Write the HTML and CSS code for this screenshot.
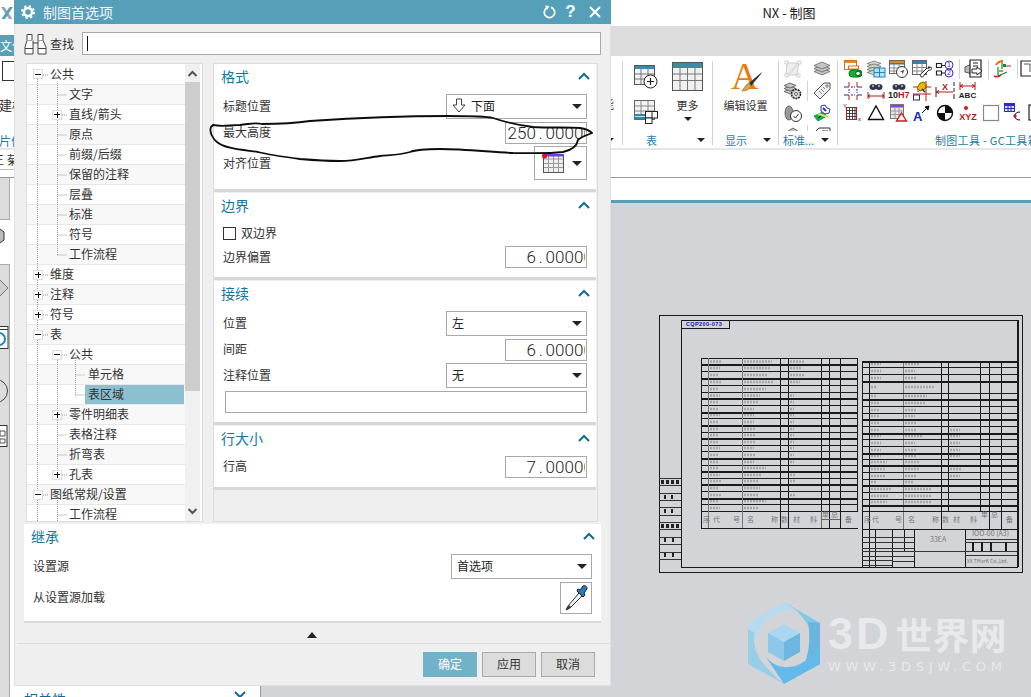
FILE: index.html
```html
<!DOCTYPE html>
<html lang="zh-CN">
<head>
<meta charset="utf-8">
<title>NX - 制图</title>
<link rel="stylesheet" href="styles.css">
</head>
<body>
<div class="app">
  <header class="app-title">
    <svg class="nx-logo" width="14" height="14" viewBox="0 0 14 14"><path d="M1 1h3.500l8 12H9z" fill="#9aa7ad"/><path d="M13 1H9.500l-8 12H5z" fill="#5a9fb8"/></svg>
    <span class="app-name">NX - 制图</span>
  </header>
  <div class="tab-band"><div class="tab-left"><span class="file-tab">文件</span></div></div>
  <div class="ribbon">
    <div class="group group-hidden">
      <div class="hidden-body">
        <div class="hidden-left"><span class="small-box"></span><span class="frag frag-build">建模</span></div>
        <span class="frag frag-right">能</span>
      </div>
      <div class="group-label label-end"><span class="frag-blue">片体</span><i class="caret"></i></div>
    </div>
    <div class="group group-table">
      <div class="table-body">
        <div class="table-col">
          <svg width="24" height="24" viewBox="0 0 24 24"><rect x=".5" y=".5" width="20" height="19" fill="#f2f2f2" stroke="#555"/><rect x="1" y="1" width="19" height="3" fill="#3d8ca6"/><path d="M1 9h19M1 14h19M7 4v15M14 4v15" stroke="#777" fill="none"/><circle cx="16.500" cy="16.500" r="6.500" fill="#fff" stroke="#222"/><path d="M13 16.500h7M16.500 13v7" stroke="#222" stroke-width="1.200"/></svg>
          <svg width="24" height="24" viewBox="0 0 24 24"><rect x=".5" y=".5" width="20" height="19" fill="#f2f2f2" stroke="#666"/><path d="M1 6h19M1 11h19M7 1v18M14 1v18" stroke="#888" fill="none"/><rect x="1" y="14" width="12" height="5" fill="#2f86a8"/><path d="M1 16.500h12" stroke="#cde"/><rect x="11.500" y="11.500" width="7" height="6.500" fill="#fff" stroke="#222"/><rect x="18" y="11.500" width="5.500" height="6.500" fill="#fff" stroke="#222"/><rect x="11.500" y="18" width="6.500" height="5.500" fill="#fff" stroke="#222"/></svg>
        </div>
        <div class="more-col">
          <svg width="31" height="29" viewBox="0 0 31 29"><rect x=".5" y=".5" width="30" height="28" fill="#f0f0f0" stroke="#555"/><rect x="1" y="1" width="29" height="4" fill="#3d8ca6"/><path d="M1 5.500h29M1 12h29M1 18.500h29M8 5v23M15.500 5v23M23 5v23" stroke="#777" fill="none"/></svg>
          <span class="ribbon-text">更多</span>
          <i class="caret caret-more"></i>
        </div>
      </div>
      <div class="group-label"><span>表</span><i class="caret"></i></div>
    </div>
    <div class="group group-display">
      <div class="display-body">
        <svg width="34" height="31" viewBox="0 0 34 31"><text x="2" y="27" class="big-a">A</text><path d="M33 10 20 21l2 3 10-12z" fill="#333"/><path d="M20 21c-3 1-4 4-5 5s-2 3-2 3c3 0 8-1 9-5z" fill="#d4a64a" stroke="#8a6a20" stroke-width=".6"/></svg>
        <span class="ribbon-text">编辑设置</span>
      </div>
      <div class="group-label"><span>显示</span><i class="caret"></i></div>
    </div>
    <div class="group group-standard">
      <div class="std-body">
        <div class="tool-row">
          <span class="tool"><svg width="18" height="18" viewBox="0 0 18 18"><path d="M3 3h12l-2 12H2z" fill="#eee" stroke="#ccc"/><path d="M5 14 14 4" stroke="#ddd" stroke-width="2"/><path d="M1 1h3v3H1zM14 1h3v3h-3zM1 14h3v3H1zM13 14h3v3h-3z" fill="#fff" stroke="#bbb" stroke-width=".7"/></svg></span>
          <span class="tool-sep tool-sep-none"></span>
          <span class="tool"><svg width="18" height="18" viewBox="0 0 18 18"><g fill="#c4c4c4" stroke="#666" stroke-width=".8"><path d="M9 8 17 11.500 9 15 1 11.500z"/><path d="M9 5 17 8.500 9 12 1 8.500z"/><path d="M9 2 17 5.500 9 9 1 5.500z"/></g></svg></span>
        </div>
        <div class="tool-row">
          <span class="tool"><svg width="18" height="18" viewBox="0 0 18 18"><g fill="#c4c4c4" stroke="#555" stroke-width=".8"><path d="M6 7 12 9.500 6 12 0 9.500z"/><path d="M6 4 12 6.500 6 9 0 6.500z"/><path d="M6 1 12 3.500 6 6 0 3.500z"/></g><circle cx="12" cy="12" r="4.500" fill="#ddd" stroke="#222" stroke-width="1.600" stroke-dasharray="2 .8"/><circle cx="12" cy="12" r="1.500" fill="#fff" stroke="#222" stroke-width=".7"/></svg></span>
          <span class="tool-sep"></span>
          <span class="tool"><svg width="18" height="18" viewBox="0 0 18 18"><path d="M11 1h6v6L7 17l-6-6z" fill="#eee" stroke="#555"/><circle cx="14" cy="4" r="1.200" fill="#fff" stroke="#444" stroke-width=".7"/><path d="M6 9l3 3M8 7l3 3M10 5l2 2" stroke="#888"/></svg></span>
        </div>
        <div class="tool-row">
          <span class="tool"><svg width="18" height="18" viewBox="0 0 18 18"><ellipse cx="5" cy="9" rx="4" ry="7" fill="#999" stroke="#666"/><circle cx="12" cy="12" r="5.500" fill="#fff" stroke="#333"/><path d="M9.500 12l2 2 3-4" fill="none" stroke="#333"/></svg></span>
          <span class="tool-sep tool-sep-none"></span>
          <span class="tool"><svg width="18" height="18" viewBox="0 0 18 18"><path d="M1 12 10 8l4 4-9 5z" fill="#1bb04a" stroke="#0a5"/><path d="M8 2l4-1 2 3 3 1-1 4-4 1-4-3z" fill="#fff" stroke="#2233cc"/><path d="M10 4l3 3" stroke="#2233cc" stroke-width="2"/><path d="M5 10l11 3" stroke="#e6e05a" stroke-width="2"/><path d="M5 14l3-2" stroke="#111"/></svg></span>
        </div>
        <div class="tool-row">
          <span class="tool"><svg width="18" height="18" viewBox="0 0 18 18"><path d="M9 2 17 7 9 12 1 7z" fill="#c4c4c4" stroke="#666"/></svg></span>
          <span class="tool-sep"></span>
          <span class="tool"><svg width="18" height="18" viewBox="0 0 18 18"><path d="M1 7 6 2h11v14H1z" fill="#fff" stroke="#333"/><path d="M9 5h6v6H9zM12 5v6M9 8h6" fill="none" stroke="#333"/></svg></span>
        </div>
      </div>
      <div class="group-label"><span>标准...</span><i class="caret"></i></div>
    </div>
    <div class="group group-tools">
      <div class="tools-body">
        <div class="tool-row">
          <span class="tool"><svg width="18" height="18" viewBox="0 0 18 18"><rect x=".5" y=".5" width="12" height="9" fill="#fff" stroke="#d8701a"/><rect x="1" y="1" width="11" height="2" fill="#e8892a"/><rect x="4.500" y="6" width="10" height="3" fill="#fff" stroke="#d8701a"/><rect x="5" y="10" width="13" height="7" rx="3.500" fill="#11b52f" stroke="#0a6a1a"/><circle cx="14" cy="13.500" r="2.300" fill="#fff" stroke="#0a4a10"/></svg></span>
          <span class="tool"><svg width="20" height="18" viewBox="0 0 20 18"><g fill="#cfd9c8" stroke="#5a6a5a" stroke-width=".7"><path d="M8 1 15 3.500 8 6 1 3.500z"/><path d="M8 4 15 6.500 8 9 1 6.500z"/><path d="M8 7 15 9.500 8 12 1 9.500z"/><path d="M8 10 15 12.500 8 15 1 12.500z"/></g><rect x="8" y="8" width="11" height="9" fill="#bde0f2" stroke="#1e86c0"/><path d="M8 12.500h11M13.500 8v9" stroke="#1e86c0"/></svg></span>
          <span class="tool"><svg width="20" height="18" viewBox="0 0 20 18"><rect x=".5" y=".5" width="15" height="13" fill="#fff" stroke="#666"/><rect x="1" y="1" width="14" height="2" fill="#e08a2a"/><rect x="1" y="3" width="14" height="1.500" fill="#2f7ea8"/><path d="M1 8h14M1 11h14M5 4v9M10 4v9" stroke="#888"/><circle cx="13" cy="12" r="5.500" fill="#fff" stroke="#333"/><path d="M10.500 12 15.500 9.500 13.500 14.500 13 12z" fill="#555"/></svg></span>
          <span class="tool"><svg width="20" height="18" viewBox="0 0 20 18"><rect x=".5" y=".5" width="14" height="14" fill="#fff" stroke="#666"/><rect x="1" y="1" width="13" height="3" fill="#2f86a8"/><path d="M1 7.500h13M1 11h13M5 4v10M10 4v10" stroke="#888"/><path d="M18 7c-1 2-2 2-3 1l-6 6c-1 1-1 3 1 3s2-2 2-2l5-5c2 1 3-1 2-3l-2 1-1-1z" fill="#fff" stroke="#333"/></svg></span>
          <span class="tool"><svg width="20" height="18" viewBox="0 0 20 18"><path d="M1.500 3.500h5v4h-5zM1.500 11h5v4h-5z" fill="#fff" stroke="#222" stroke-width="1.200"/><path d="M6.500 5.500h4M6.500 13h4" stroke="#222"/><circle cx="14" cy="5" r="4" fill="#fff" stroke="#3a2bb5"/><circle cx="14" cy="13" r="4" fill="#fff" stroke="#3a2bb5"/><text x="14" y="7" class="t-num">1</text><text x="14" y="15" class="t-num">2</text></svg></span>
          <span class="tool-sep"></span>
          <span class="tool"><svg width="20" height="20" viewBox="0 0 20 20"><path d="M1 8 8 5v10l-7-2z" fill="#bbb" stroke="#555"/><path d="M6 1h11v17H6z" fill="#fff" stroke="#222" stroke-width="1.200"/><path d="M9 4h5M9 7h5" stroke="#222"/><path d="M8 10h5V8l5 4-5 4v-2H8z" fill="#fff" stroke="#222"/></svg></span>
          <span class="tool-sep"></span>
          <span class="tool"><svg width="20" height="20" viewBox="0 0 20 20"><path d="M5 17V8M5 17l9-4M9 10V2" stroke="#1a8a30" stroke-width="1.200" fill="none"/><path d="M3 6c2-3 4-4 7-4" stroke="#e86a1a" stroke-width="2" fill="none"/><path d="M1 17c2 1 5 1 7-1" stroke="#d02020" stroke-width="1.500" fill="none"/><rect x="10" y="5" width="3" height="3" fill="#1a8a30"/><path d="M13 7h5" stroke="#d02020"/><rect x="6" y="11" width="4" height="2" fill="#7ac020"/></svg></span>
          <span class="tool-sep"></span>
          <span class="tool tool-edge"><svg width="20" height="20" viewBox="0 0 20 20"><path d="M1 2h14v15H1z" fill="#fff" stroke="#222" stroke-width="1.200"/><path d="M4 5h6v8" fill="none" stroke="#555"/></svg></span>
        </div>
        <div class="tool-row">
          <span class="tool"><svg width="18" height="18" viewBox="0 0 18 18" fill="none"><path d="M0 5h5M13 5h5M0 13h5M13 13h5" stroke="#2a2a9a"/><path d="M5 0v5M13 0v5M5 13v5M13 13v5" stroke="#c01818"/><path d="M7 5h4M7 13h4M5 7v4M13 7v4" stroke="#2a2a9a" stroke-dasharray="2 1"/></svg></span>
          <span class="tool"><svg width="18" height="18" viewBox="0 0 18 18"><ellipse cx="6" cy="5" rx="3.500" ry="3" fill="#334"/><ellipse cx="12" cy="5" rx="3.500" ry="3" fill="#334"/><circle cx="6" cy="4" r="1.200" fill="#8ac"/><circle cx="12" cy="4" r="1.200" fill="#8ac"/><path d="M1 10v7M17 10v7M1 14h16M1 14l2-1.500M1 14l2 1.500M17 14l-2-1.500M17 14l-2 1.500" stroke="#b01818" fill="none"/></svg></span>
          <span class="tool"><svg width="22" height="18" viewBox="0 0 22 18"><ellipse cx="8" cy="5" rx="3.500" ry="3" fill="#334"/><ellipse cx="14" cy="5" rx="3.500" ry="3" fill="#334"/><circle cx="8" cy="4" r="1.200" fill="#8ac"/><circle cx="14" cy="4" r="1.200" fill="#8ac"/><text x="0" y="16" class="t-tol">10<tspan class="t-red">H7</tspan></text></svg></span>
          <span class="tool"><svg width="20" height="20" viewBox="0 0 20 20"><path d="M1 6h18M1 13h18M14 0v20M6 7v4" stroke="#c01818" fill="none"/><rect x="1.500" y="14" width="6" height="5" fill="#fff" stroke="#2a2a9a"/><path d="M8 2l4-1 2 3-1 4-5 2-3-3z" fill="#e6b800" stroke="#8a6a00"/><path d="M10 8l3 3" stroke="#333" stroke-width="1.500"/></svg></span>
          <span class="tool"><svg width="20" height="20" viewBox="0 0 20 20" fill="none"><path d="M1 6v10M19 1v4M19 7v4M19 13v5" stroke="#222"/><path d="M1 11h17M1 11l3-1.500M1 11l3 1.500" stroke="#b01818"/><text x="10" y="9" class="t-x">X</text></svg></span>
          <span class="tool"><svg width="20" height="20" viewBox="0 0 20 20"><path d="M2 1v8M17 1v8M2 5h15M2 5l3-1.500M2 5l3 1.500M17 5l-3-1.500M17 5l-3 1.500" stroke="#b01818" fill="none"/><text x="9.500" y="17" class="t-abc">ABC</text></svg></span>
        </div>
        <div class="tool-row">
          <span class="tool"><svg width="20" height="18" viewBox="0 0 20 18"><text x="0" y="4" class="t-mini">Y</text><rect x="3.500" y="3.500" width="10" height="12" fill="#fff" stroke="#b01818"/><path d="M4 6.500h9M4 9.500h9M4 12.500h9M6.500 4v11M9.500 4v11M12 4v11" stroke="#333" stroke-width=".9"/><text x="15" y="17" class="t-mini">x</text></svg></span>
          <span class="tool"><svg width="18" height="18" viewBox="0 0 18 18"><path d="M9 2 16.500 15.500h-15z" fill="#fff" stroke="#111" stroke-width="1.400"/></svg></span>
          <span class="tool"><svg width="18" height="18" viewBox="0 0 18 18"><rect x=".5" y=".5" width="13" height="14" fill="#e8e8e8" stroke="#777"/><rect x="1" y="1" width="12" height="2.500" fill="#7a4ad8"/><path d="M1 7h12M1 10.500h12M5 3v12M9 3v12" stroke="#999"/><path d="M11.500 9 16.500 17h-10z" fill="#fff" stroke="#d01818" stroke-width="1.400"/></svg></span>
          <span class="tool"><svg width="18" height="18" viewBox="0 0 18 18"><path d="M9 9l7-7M16 2l-4 1 3 3z" stroke="#111" fill="#111"/><text x="0" y="17" class="t-a">A</text></svg></span>
          <span class="tool"><svg width="18" height="18" viewBox="0 0 18 18"><circle cx="9" cy="9" r="7.500" fill="#fff" stroke="#111" stroke-width="1.400"/><path d="M9 1.500A7.500 7.500 0 0 1 16.500 9H9zM9 9v7.500A7.500 7.500 0 0 1 1.500 9z" fill="#111"/></svg></span>
          <span class="tool"><svg width="22" height="18" viewBox="0 0 22 18"><circle cx="9" cy="4" r="2" fill="#d01818"/><text x="11" y="16" class="t-xyz">XYZ</text></svg></span>
          <span class="tool"><svg width="18" height="18" viewBox="0 0 18 18"><rect x="1.500" y="1.500" width="15" height="15" fill="#fff" stroke="#888" stroke-width="1.200"/></svg></span>
          <span class="tool"><svg width="20" height="20" viewBox="0 0 20 20"><rect x=".5" y=".5" width="10" height="8" fill="#ddd" stroke="#2a2ad0"/><rect x="1" y="1" width="9" height="2" fill="#2a2ad0"/><path d="M1 5.500h9M4 3v5M7 3v5" stroke="#2a2ad0"/><path d="M16 9c-3 0-5 1-5 4s2 4 5 4" fill="none" stroke="#111"/><circle cx="11" cy="13" r="1.700" fill="#d01818"/></svg></span>
          <span class="tool tool-edge"><svg width="20" height="20" viewBox="0 0 20 20"><rect x="4" y="2" width="14" height="15" fill="#fff" stroke="#222" stroke-width="1.200"/></svg></span>
        </div>
      </div>
      <div class="group-label"><span class="tools-name">制图工具 - GC工具箱</span></div>
    </div>
  </div>
  <div class="cmd-band"><div class="cmd-left"><span class="frag frag-cmd">王 菊</span></div></div>
  <div class="main">
    <aside class="sidebar">
      <div class="rail">
        <div class="rail-top"></div>
        <div class="rail-icon"><svg width="9" height="16" viewBox="0 0 9 16"><path d="M-6 4 0 1l4 3v8l-4 3-6-3z" fill="#bbb" stroke="#333"/></svg></div>
        <div class="rail-panel">
          <svg width="9" height="24" viewBox="0 0 9 24"><path d="M-8 12 0 4l8 8-8 8z" fill="#cfcfcf" stroke="#777"/></svg>
          <svg width="9" height="24" viewBox="0 0 9 24"><rect x="-8" y=".5" width="16" height="22" fill="#fff" stroke="#333"/><path d="M-8 3.500H8" stroke="#333"/><circle cx="-1" cy="13" r="6" fill="none" stroke="#1e86c0" stroke-width="2"/></svg>
          <svg width="9" height="30" viewBox="0 0 9 30"><circle cx="-4" cy="15" r="11.500" fill="none" stroke="#444"/></svg>
          <svg class="rail-last" width="9" height="24" viewBox="0 0 9 24"><rect x="-8" y=".5" width="15" height="21" fill="#fff" stroke="#333"/><path d="M0 6h5v5H0zM0 14h5v4H0z" fill="none" stroke="#555"/></svg>
        </div>
      </div>
      <div class="side-foot"><span class="side-foot-name">相关性</span><svg width="12" height="8" viewBox="0 0 12 8"><path d="M1 1l5 5 5-5" fill="none" stroke="#0e6d8f" stroke-width="2"/></svg></div>
    </aside>
    <div class="workspace">
      <div class="view-band"></div>
      <div class="canvas">
        <svg class="sheet" width="364" height="258" viewBox="659 315 364 258">
          <g fill="none" stroke="#a8a8a8" stroke-width="2.500" stroke-dasharray="2 1">
            <path d="M710 361.500h12M744 361.500h28M790 361.500h14M710 368h10M744 368h26M790 368h12M710 375h8M744 375h24M790 375h14M710 382h12M744 382h30M790 382h10M710 389h8M744 389h22M710 395.500h10M744 395.500h16M790 395.500h4M710 402h8M744 402h14M790 402h4M710 409h8M744 409h10M790 409h4M710 415h10M744 415h10M790 415h4M710 422h8M744 422h10M790 422h4M710 429h8M744 429h12M790 429h4M710 435h8M744 435h12M790 435h4M710 442h8M744 442h12M790 442h4M710 448h10M744 448h10M790 448h4M710 455h8M744 455h12M790 455h4M710 462h8M744 462h10M790 462h4M710 468h8M744 468h22M710 475h10M744 475h18M790 475h6M710 481h12M744 481h14M790 481h6M710 488h8M744 488h16M710 495h12M744 495h14M790 495h6M710 501h8M744 501h22M710 508h10M744 508h14"/>
            <path d="M871 364h10M905 364h14M871 371h10M905 371h10M871 378h10M905 378h12M871 387h6M905 387h30M871 396h6M905 396h22M871 403h8M905 403h20M871 410h8M905 410h12M871 416h8M905 416h10M871 423h8M905 423h12M871 430h8M905 430h12M950 430h10M871 436h10M905 436h18M950 436h10M871 443h10M905 443h10M950 443h10M871 450h10M905 450h12M950 450h10M871 456h10M905 456h12M950 456h10M871 462h16M905 462h14M871 469h14M905 469h14M950 469h12M871 476h14M905 476h12M950 476h10M871 482h6M905 482h8M871 489h20M905 489h26M871 496h18M905 496h26M871 502h16M905 502h26"/>
          </g>
          <g fill="none" stroke="#1a1a1a" shape-rendering="crispEdges">
            <rect x="659.500" y="315.500" width="363" height="257"/>
            <rect x="681.500" y="320.500" width="336" height="247" stroke-width="1.400"/>
            <path d="M1017.500 320v247" stroke-width="2"/>
            <path d="M681 328h48V321"/>
            <path d="M659 478h22M659 485h22M659 493h22M659 500h22M659 507h22M659 515h22M659 522h22M659 529h22M659 537h22M659 544h22M659 552h22M659 559h22" stroke="#333"/>
            <path d="M701.500 358v170M857.500 358v153M701 528.500h157M701 511.500h157" stroke-width="1.200"/>
            <path d="M701 358.500h157M701 364.500h157M701 371.500h157M701 378.500h157M701 385.500h157M701 392.500h157M701 398.500h157M701 405.500h157M701 412.500h157M701 418.500h157M701 425.500h157M701 432.500h157M701 438.500h157M701 445.500h157M701 451.500h157M701 458.500h157M701 465.500h157M701 471.500h157M701 478.500h157M701 484.500h157M701 491.500h157M701 498.500h157M701 504.500h157"/>
            <path d="M701 365.500h157M701 379.500h157M701 399.500h157M701 413.500h157M701 426.500h157M701 439.500h157M701 459.500h157M701 472.500h157M701 485.500h157M701 499.500h157"/>
            <path d="M780.500 358v170M788.500 358v170M821.500 358v153M829.500 358v170M840.500 358v170M857.500 358v153"/>
            <path d="M708.500 358v170M742.500 358v170" stroke="#777"/>
            <path d="M821 519h19M821.500 511v17" stroke="#666"/>
            <path d="M862.500 361v206M941.500 361v168M948.500 361v150M980.500 361v150M989.500 361v168M1001.500 361v168M869.500 361v168"/>
            <path d="M903.500 361v168" stroke="#777"/>
            <path d="M862 361.500h155M862 367.500h155M862 374.500h155M862 381.500h155M862 393.500h155M862 399.500h155M862 406.500h155M862 413.500h155M862 419.500h155M862 426.500h155M862 433.500h155M862 439.500h155M862 446.500h155M862 453.500h155M862 459.500h155M862 465.500h155M862 472.500h155M862 479.500h155M862 485.500h155M862 492.500h155M862 499.500h155M862 505.500h155M862 511.500h155M862 529.500h155"/>
            <path d="M862 362.500h155M862 382.500h155M862 400.500h155M862 420.500h155M862 434.500h155M862 454.500h155M862 466.500h155M862 486.500h155M862 506.500h155"/>
            <path d="M869.500 529v38M875.500 529v38M892.500 529v38M904.500 529v22M914.500 529v38M965.500 529v38"/>
            <path d="M862 537.500h52M862 542.500h52M862 548.500h52M862 551.500h52M862 556.500h30M862 560.500h30M862 565.500h30M892 556.500h22M892 561.500h22M914 551.500h51M965 539.500h52M965 542.500h52M965 551.500h52M965 555.500h52" stroke="#333"/>
            <path d="M972.500 542v9M981.500 542v9M990.500 542v9M1005.500 542v9" stroke-width="2"/>
          </g>
          <g fill="none" stroke="#222" stroke-width="4">
            <path d="M661 482h3M666 482h3M671 482h3M676 482h3M664 497h2M671 497h2M664 511h2M671 511h2M661 526h3M666 526h3M671 526h3M676 526h3M664 540h2M672 540h2M664 555h2M672 555h2"/>
          </g>
          <text x="686" y="326" class="sheet-tab">CQP200-073</text>
          <g class="sheet-text">
            <text x="703" y="522">序</text><text x="713" y="522">代</text><text x="733" y="522">号</text><text x="747" y="522">名</text><text x="771" y="522">称</text><text x="781" y="522">数</text><text x="793" y="522">材</text><text x="810" y="522">料</text><text x="822" y="517">单</text><text x="831" y="517">总</text><text x="845" y="522">备</text>
            <text x="864" y="522">序</text><text x="872" y="522">代</text><text x="895" y="522">号</text><text x="908" y="522">名</text><text x="932" y="522">称</text><text x="942" y="522">数</text><text x="953" y="522">材</text><text x="970" y="522">料</text><text x="981" y="517">单</text><text x="991" y="517">总</text><text x="1006" y="522">备</text>
            <text x="930" y="542">33EA</text><text x="972" y="536">IOO-00 (A3)</text><text x="967" y="563" class="sheet-fine">XX TMarK Co.,Ltd.</text>
          </g>
        </svg>
        <div class="watermark">
          <svg width="72" height="82" viewBox="0 0 72 82">
            <path d="M0 21 36 0 50 8C34 6 18 14 11 30L0 48z" fill="#b8daee"/>
            <path d="M36 0 72 21V50C68 38 62 22 48 8z" fill="#80c7ea"/>
            <path d="M72 21V62L50 74C58 64 64 44 60 20z" fill="#68b5dd"/>
            <path d="M72 62 36 82 18 55C30 70 54 70 72 44z" fill="#63bae8"/>
            <path d="M36 82 0 62V28L6 30C4 50 14 64 36 82z" fill="#98cde8"/>
            <path d="M36 18 56 29.500V52.500L36 64 16 52.500V29.500z" fill="#d3d4d8"/>
            <path d="M36 22 52 31 36 40 20 31z" fill="#aad7ef"/>
            <path d="M20 31 36 40V59L20 50z" fill="#8fc7ea"/>
            <path d="M52 31 36 40V59L52 50z" fill="#6cb7e0"/>
          </svg>
          <div class="wm-text">
            <div class="wm-main"><span class="wm-latin">3D</span>世界网</div>
            <div class="wm-sub">WWW.3DSJW.COM</div>
          </div>
        </div>
      </div>
    </div>
  </div>
</div>

<section class="dialog">
  <div class="dlg-title">
    <svg class="gear" width="14" height="14" viewBox="0 0 14 14"><circle cx="7" cy="7" r="5.700" fill="none" stroke="#fff" stroke-width="2.400" stroke-dasharray="2.300 2.170"/><circle cx="7" cy="7" r="4" fill="none" stroke="#fff" stroke-width="2.400"/></svg>
    <span class="dlg-name">制图首选项</span>
    <span class="dlg-actions">
      <svg width="14" height="14" viewBox="0 0 14 14"><path d="M5 2.800A5.200 5.200 0 1 0 9 2.400" fill="none" stroke="#fff" stroke-width="1.700"/><path d="M3 .5 7.500 1 5 5z" fill="#fff"/></svg>
      <span class="dlg-help">?</span>
      <svg width="14" height="14" viewBox="0 0 14 14"><path d="M2 2l10 10M12 2 2 12" stroke="#fff" stroke-width="2"/></svg>
    </span>
  </div>
  <div class="dlg-search">
    <svg width="24" height="22" viewBox="0 0 24 22" fill="none" stroke="#444"><path d="M3 1.500h5v6H3zM14 1.500h5v6h-5z" fill="#fff"/><path d="M3 7.500 1 14v7h8V7.500M19 7.500l3 6.500v7h-8V7.500M9 10h5" fill="#fff"/><path d="M1 15.500h8M14 15.500h8"/></svg>
    <span class="search-label">查找</span>
    <div class="search-input"><i class="text-caret"></i></div>
  </div>
  <div class="dlg-main">
    <nav class="tree">
      <div class="tree-rows">
        <div class="tree-row lv0"><i class="toggle minus"></i><span class="tree-text">公共</span></div>
        <div class="tree-row lv1"><i class="toggle none"></i><span class="tree-text">文字</span></div>
        <div class="tree-row lv1"><i class="toggle plus"></i><span class="tree-text">直线/箭头</span></div>
        <div class="tree-row lv1"><i class="toggle none"></i><span class="tree-text">原点</span></div>
        <div class="tree-row lv1"><i class="toggle none"></i><span class="tree-text">前缀/后缀</span></div>
        <div class="tree-row lv1"><i class="toggle none"></i><span class="tree-text">保留的注释</span></div>
        <div class="tree-row lv1"><i class="toggle none"></i><span class="tree-text">层叠</span></div>
        <div class="tree-row lv1"><i class="toggle none"></i><span class="tree-text">标准</span></div>
        <div class="tree-row lv1"><i class="toggle none"></i><span class="tree-text">符号</span></div>
        <div class="tree-row lv1"><i class="toggle none"></i><span class="tree-text">工作流程</span></div>
        <div class="tree-row lv0"><i class="toggle plus"></i><span class="tree-text">维度</span></div>
        <div class="tree-row lv0"><i class="toggle plus"></i><span class="tree-text">注释</span></div>
        <div class="tree-row lv0"><i class="toggle plus"></i><span class="tree-text">符号</span></div>
        <div class="tree-row lv0"><i class="toggle minus"></i><span class="tree-text">表</span></div>
        <div class="tree-row lv1"><i class="toggle minus"></i><span class="tree-text">公共</span></div>
        <div class="tree-row lv2"><i class="toggle none"></i><span class="tree-text">单元格</span></div>
        <div class="tree-row lv2"><i class="toggle none"></i><span class="tree-text selected">表区域</span></div>
        <div class="tree-row lv1"><i class="toggle plus"></i><span class="tree-text">零件明细表</span></div>
        <div class="tree-row lv1"><i class="toggle none"></i><span class="tree-text">表格注释</span></div>
        <div class="tree-row lv1"><i class="toggle none"></i><span class="tree-text">折弯表</span></div>
        <div class="tree-row lv1"><i class="toggle plus"></i><span class="tree-text">孔表</span></div>
        <div class="tree-row lv0"><i class="toggle minus"></i><span class="tree-text">图纸常规/设置</span></div>
        <div class="tree-row lv1"><i class="toggle none"></i><span class="tree-text">工作流程</span></div>
        <svg class="tree-guides" width="158" height="458" viewBox="0 0 158 458">
          <path fill="none" stroke="#999" stroke-dasharray="1 1" d="M10.500 15V206M10.500 216V226M10.500 236V246M10.500 256V266M10.500 276V426M10.500 436V458M16 11H21M16 211H21M16 231H21M16 251H21M16 271H21M16 431H21M30.500 19V46M30.500 56V191M30.500 296V346M30.500 356V406M30.500 436V458M30.500 31H40M30.500 71H40M30.500 91H40M30.500 111H40M30.500 131H40M30.500 151H40M30.500 171H40M30.500 191H40M30.500 371H40M30.500 391H40M30.500 451H40M35 51H40M35 291H40M35 351H40M35 411H40M48.500 296V331M48.500 311H58M48.500 331H58"/>
        </svg>
      </div>
      <div class="scrollbar">
        <svg width="15" height="18" viewBox="0 0 15 18"><path d="M3.500 12 7.500 8l4 4" fill="none" stroke="#555" stroke-width="2"/></svg>
        <div class="scroll-track"><div class="scroll-thumb"></div></div>
        <svg width="15" height="18" viewBox="0 0 15 18"><path d="M3.500 6l4 4 4-4" fill="none" stroke="#555" stroke-width="2"/></svg>
      </div>
    </nav>
    <div class="pane">
      <section class="card">
        <header class="card-head"><span>格式</span><svg width="12" height="8" viewBox="0 0 12 8"><path d="M1 7l5-5 5 5" fill="none" stroke="#0e6d8f" stroke-width="2"/></svg></header>
        <div class="form-row"><label>标题位置</label>
          <div class="select"><span class="select-value"><svg width="14" height="15" viewBox="0 0 14 15"><path d="M4.500 1h5v6h3.500L7 14 1 7h3.500z" fill="#fff" stroke="#444"/></svg>下面</span><i class="caret"></i></div></div>
        <div class="form-row"><label>最大高度</label><div class="num"><span class="num-val">250<i class="num-dot">.</i>00000</span></div></div>
        <div class="form-row"><label>对齐位置</label>
          <div class="select select-table"><svg width="22" height="19" viewBox="0 0 22 19"><rect x="1.500" y="1.500" width="20" height="17" fill="#f0f0f0" stroke="#555"/><path d="M2 5h19M2 9.500h19M2 13.500h19M6.500 2v16M11.500 2v16M16.500 2v16" stroke="#999"/><rect x="1" y="0" width="21" height="2.500" fill="#6a3fe0"/><circle cx="2.500" cy="2" r="2.500" fill="#e0101a"/></svg><i class="caret"></i></div></div>
      </section>
      <section class="card">
        <header class="card-head"><span>边界</span><svg width="12" height="8" viewBox="0 0 12 8"><path d="M1 7l5-5 5 5" fill="none" stroke="#0e6d8f" stroke-width="2"/></svg></header>
        <div class="form-row check-row"><i class="check"></i><label>双边界</label></div>
        <div class="form-row"><label>边界偏置</label><div class="num"><span class="num-val">6<i class="num-dot">.</i>00000</span></div></div>
      </section>
      <section class="card">
        <header class="card-head"><span>接续</span><svg width="12" height="8" viewBox="0 0 12 8"><path d="M1 7l5-5 5 5" fill="none" stroke="#0e6d8f" stroke-width="2"/></svg></header>
        <div class="form-row"><label>位置</label><div class="select"><span class="select-value">左</span><i class="caret"></i></div></div>
        <div class="form-row"><label>间距</label><div class="num"><span class="num-val">6<i class="num-dot">.</i>00000</span></div></div>
        <div class="form-row"><label>注释位置</label><div class="select"><span class="select-value">无</span><i class="caret"></i></div></div>
        <div class="text-box"></div>
      </section>
      <section class="card">
        <header class="card-head"><span>行大小</span><svg width="12" height="8" viewBox="0 0 12 8"><path d="M1 7l5-5 5 5" fill="none" stroke="#0e6d8f" stroke-width="2"/></svg></header>
        <div class="form-row"><label>行高</label><div class="num"><span class="num-val">7<i class="num-dot">.</i>00000</span></div></div>
      </section>
    </div>
  </div>
  <section class="card card-inherit">
    <header class="card-head"><span>继承</span><svg width="12" height="8" viewBox="0 0 12 8"><path d="M1 7l5-5 5 5" fill="none" stroke="#0e6d8f" stroke-width="2"/></svg></header>
    <div class="form-row"><label>设置源</label><div class="select"><span class="select-value">首选项</span><i class="caret"></i></div></div>
    <div class="form-row"><label>从设置源加载</label>
      <div class="pick"><svg width="24" height="28" viewBox="0 0 24 28"><path d="M15 9 4 22l-2 4 4-2 12-12z" fill="#eef4f8" stroke="#333"/><path d="M3 25l3-3" stroke="#333" stroke-width="2"/><path d="M13 7l6 6 2-2-1-2 3-4c0-3-2-4-4-3l-3 4-2-1z" fill="#2f79b5" stroke="#123"/></svg></div></div>
  </section>
  <div class="collapse"><i class="tri-up"></i></div>
  <footer class="dlg-foot">
    <button class="btn btn-primary" type="button">确定</button>
    <button class="btn" type="button">应用</button>
    <button class="btn" type="button">取消</button>
  </footer>
</section>

<svg class="scribble" width="400" height="60" viewBox="205 110 400 60">
  <path fill="none" stroke="#0c0c0c" stroke-width="1.800" stroke-linejoin="round" stroke-linecap="round" d="M213 125C222 127 230 125 240 125C250 124 255 122 262 124C275 124 290 124 310 121C340 119 400 116 447 116C470 116 485 116 493 118C505 122 515 125 533 127C550 128 570 127 580 128C586 129 590 131 592 133C588 135 582 136 578 140C577 146 572 150 563 152C545 154 530 153 513 153C490 152 465 149 440 149C425 149 415 150 410 152C400 155 390 155 380 156C365 158 355 161 340 161C325 161 312 160 300 159C285 157 270 155 258 152C245 150 225 149 217 142C213 139 209 132 211 127Z"/>
</svg>
</body>
</html>
```

FILE: styles.css
```css
* { box-sizing: border-box; }
html, body { margin: 0; padding: 0; height: 100%; }
body {
  width: 1031px;
  height: 697px;
  overflow: hidden;
  position: relative;
  background: #d3d4d8;
  font-family: "Noto Sans CJK SC", "Liberation Sans", sans-serif;
  font-size: 12px;
  color: #333;
}
svg { display: block; flex: none; }

/* ---------- application behind the dialog ---------- */
.app { display: flex; flex-direction: column; width: 1031px; height: 697px; background: #fff; }
.app-title { height: 26px; flex: none; display: flex; align-items: center; position: relative; background: #fff; padding-left: 547px; }
.nx-logo { position: absolute; left: 0; top: 6px; }
.app-name { flex: 1; text-align: center; font-size: 13px; color: #222; line-height: 24px; }
.tab-band { height: 30px; flex: none; background: #dcdcdc; }
.tab-left { width: 14px; height: 30px; background: #fff; padding-top: 9px; overflow: hidden; }
.file-tab { display: block; width: 30px; height: 21px; background: #5a9fb8; color: #fff; line-height: 21px; font-size: 12px; }

.ribbon { height: 94px; flex: none; display: flex; background: #fff; border-bottom: 2px solid #e6e6e6; }
.group { flex: none; display: flex; flex-direction: column; border-right: 1px solid #d2d2d2; margin: 5px 0 3px; }
.group-hidden { width: 623px; margin: 0; border-right: 0; position: relative; }
.group-hidden::after { content: ""; position: absolute; right: 0; top: 5px; bottom: 3px; width: 1px; background: #d2d2d2; }
.group-table { width: 90px; }
.group-display { width: 66px; }
.group-standard { width: 59px; }
.group-tools { flex: 1; min-width: 0; border-right: 0; }
.group-label { height: 18px; flex: none; margin-top: auto; margin-bottom: -4px; display: flex; align-items: center; font-size: 11px; color: #1b7ea3; white-space: nowrap; padding-right: 7px; }
.group-label .caret { margin-left: auto; }
.group-table .group-label { padding-left: 23px; }
.group-display .group-label { padding-left: 12px; }
.group-standard .group-label { padding-left: 4px; padding-right: 8px; }
.group-tools .group-label { padding-left: 97px; overflow: hidden; }
.tools-name { flex: none; letter-spacing: .3px; }
.label-end { padding-right: 9px; margin-bottom: -1px; }

.hidden-body { flex: 1; min-height: 0; overflow: hidden; display: flex; justify-content: space-between; }
.hidden-left { display: flex; flex-direction: column; padding-left: 2px; }
.small-box { width: 20px; height: 20px; margin-top: 5px; border: 1px solid #333; flex: none; }
.frag { font-size: 12px; color: #333; white-space: nowrap; }
.frag-build { margin-top: 14px; margin-left: -3px; font-size: 13px; }
.frag-blue { color: #1b7ea3; font-size: 12px; margin-left: -1px; }
.frag-right { margin: 39px 9px 0 0; }
.frag-cmd { margin-left: -8px; display: inline-block; }

.table-body { display: flex; padding-left: 11px; flex: 1; min-height: 0; overflow: hidden; }
.table-col { display: flex; flex-direction: column; gap: 11px; padding-top: 4px; }
.more-col { display: flex; flex-direction: column; align-items: center; margin-left: 14px; padding-top: 1px; }
.ribbon-text { font-size: 11px; line-height: 16px; margin-top: 6px; color: #333; }
.caret-more { margin-top: 4px; }
.display-body { display: flex; flex-direction: column; align-items: center; padding-top: 1px; flex: 1; min-height: 0; overflow: hidden; }
.display-body .ribbon-text { margin-top: 4px; }
.big-a { font-family: "Liberation Serif", serif; font-size: 38px; fill: #e87d0d; }

.std-body, .tools-body { flex: 1; min-height: 0; display: flex; flex-direction: column; overflow: hidden; }
.std-body { padding-left: 2px; margin-top: -3px; }
.tools-body { padding-left: 3px; margin-top: -3px; }
.tool-row { display: flex; height: 22px; flex: none; align-items: center; }
.tool { width: 23px; height: 22px; flex: none; display: flex; align-items: center; justify-content: center; }
.tool-edge { justify-content: flex-start; }
.tool-sep { width: 1px; height: 20px; margin: 0 2.500px; background: #d2d2d2; flex: none; }
.tool-sep-none { background: transparent; }
.t-num { font: 7px "Liberation Sans", sans-serif; fill: #3a2bb5; text-anchor: middle; }
.t-tol { font: bold 9px "Liberation Sans", sans-serif; fill: #222; }
.t-red { fill: #b01818; }
.t-x { font: bold 9px "Liberation Sans", sans-serif; fill: #b01818; text-anchor: middle; }
.t-abc { font: bold 8px "Liberation Sans", sans-serif; fill: #222; text-anchor: middle; }
.t-mini { font: 6px "Liberation Sans", sans-serif; fill: #222; }
.t-a { font: bold 13px "Liberation Sans", sans-serif; fill: #1a2aa8; }
.t-xyz { font: bold 9px "Liberation Sans", sans-serif; fill: #b01818; text-anchor: middle; }

.caret { display: block; flex: none; width: 0; height: 0; border-left: 5px solid transparent; border-right: 5px solid transparent; border-top: 5px solid #222; }
.group .caret { border-left-width: 4px; border-right-width: 4px; border-top-width: 4px; }

.cmd-band { height: 28px; flex: none; background: #fff; border-bottom: 1px solid #999; }
.cmd-left { width: 14px; height: 20px; overflow: hidden; line-height: 20px; border-bottom: 1px solid #bbb; white-space: nowrap; }

.main { flex: 1; min-height: 0; display: flex; }
.sidebar { width: 261px; flex: none; background: #fff; border-right: 1px solid #999; display: flex; flex-direction: column; position: relative; }
.rail { width: 10px; flex: 1; display: flex; flex-direction: column; overflow: hidden; }
.rail-top { height: 42px; background: #dcdcdc; border: 1px solid #aaa; border-width: 0 1px 1px 0; flex: none; }
.rail-icon { height: 44px; flex: none; padding-top: 8px; }
.rail-panel { flex: 1; background: #dcdcdc; border: 1px solid #aaa; border-width: 1px 1px 0 0; padding-top: 11px; display: flex; flex-direction: column; gap: 26px; }
.rail-last { margin-top: -7px; }
.side-foot { position: absolute; left: 14px; right: 0; bottom: 0; height: 11px; overflow: hidden; background: #fff; display: flex; justify-content: space-between; padding: 5px 14px 0 10px; }
.side-foot-name { color: #0e6d8f; font-size: 14px; line-height: 16px; flex: none; }

.workspace { flex: 1; min-width: 0; display: flex; flex-direction: column; }
.view-band { height: 22px; flex: none; background: #fff; }
.canvas { flex: 1; position: relative; background: #d3d4d8; border-top: 3px solid #569fb9; }
.sheet { position: absolute; left: 398px; top: 112px; }
.sheet-tab { font: bold 5.500px "Liberation Sans", sans-serif; fill: #1414d0; letter-spacing: .4px; }
.sheet-text text { font: 7px "Noto Sans CJK SC", sans-serif; fill: #777; }
.sheet-text .sheet-fine { font-size: 5px; }
.watermark { position: absolute; left: 487px; top: 399px; display: flex; gap: 8px; }
.wm-text { display: flex; flex-direction: column; margin-top: 14px; color: #e8e9ec; }
.wm-main { font-size: 37px; font-weight: 700; line-height: 36px; white-space: nowrap; display: flex; align-items: center; height: 36px; }
.wm-latin { font-family: "Liberation Sans", sans-serif; font-size: 45px; letter-spacing: 3px; margin-right: 4px; }
.wm-sub { font: 13px/14px "DejaVu Sans", sans-serif; letter-spacing: 4.700px; margin-top: 8px; white-space: nowrap; }

/* ---------- dialog ---------- */
.dialog { position: absolute; left: 14px; top: 0; width: 597px; height: 686px; background: #efefef; border: 1px solid #e0e0e0; border-top: 0; display: flex; flex-direction: column; }
.dlg-title { height: 24px; flex: none; margin: 0 -1px; background: #569fb9; display: flex; align-items: center; padding: 0 9px 0 7px; color: #fff; }
.dlg-name { font-size: 14px; margin-left: 8px; color: #f2f7f9; line-height: 24px; }
.dlg-actions { margin-left: auto; display: flex; align-items: center; gap: 9px; }
.dlg-help { font: bold 17px/20px "Liberation Sans", sans-serif; width: 11px; text-align: center; margin-right: 3px; }
.dlg-search { height: 23px; flex: none; margin-top: 8px; display: flex; align-items: center; padding: 0 9px; }
.search-label { margin-left: 2px; width: 32px; flex: none; color: #333; padding-bottom: 1px; }
.search-input { flex: 1; height: 23px; background: #fff; border: 1px solid #aaa; padding: 3px 4px; }
.text-caret { display: block; width: 1px; height: 15px; background: #111; }
.dlg-main { height: 459px; flex: none; margin-top: 8px; padding: 0 12px 0 11px; display: flex; gap: 10px; }

.tree { width: 177px; flex: none; background: #fff; border: 1px solid #ddd; display: flex; overflow: hidden; }
.tree-rows { width: 158px; flex: none; position: relative; }
.tree-row { height: 20px; display: flex; align-items: center; border-top: 1px solid #e8e8e8; white-space: nowrap; background: #fff; color: #333; }
.tree-row:first-child { border-top: 0; }
.tree-row:nth-child(even) { background: #f8f8f8; }
.lv0 { padding-left: 6px; }
.lv1 { padding-left: 25px; }
.lv2 { padding-left: 44px; }
.toggle { width: 10px; height: 10px; flex: none; margin-right: 7px; border: 1px solid #ddd; background: #fff; position: relative; }
.toggle.none { border: 0; background: none; }
.toggle.minus::before, .toggle.plus::before { content: ""; position: absolute; left: 1px; top: 3.500px; width: 6px; height: 1px; background: #111; }
.toggle.plus::after { content: ""; position: absolute; left: 3.500px; top: 1px; width: 1px; height: 6px; background: #111; }
.tree-text { padding-bottom: 2px; height: 19px; line-height: 17px; }
.tree-text.selected { flex: 1; align-self: stretch; height: auto; background: #8cc0d1; margin-left: -3px; padding-left: 3px; margin-right: 1px; }
.tree-guides { position: absolute; left: 0; top: 0; pointer-events: none; }
.scrollbar { width: 15px; flex: none; display: flex; flex-direction: column; background: #f0f0f0; }
.scroll-track { flex: 1; min-height: 0; }
.scroll-thumb { height: 309px; background: #cdcdcd; }

.pane { flex: 1; min-width: 0; background: #efefef; border: 1px solid #ddd; padding-right: 1px; display: flex; flex-direction: column; gap: 1px; }
.card { background: #fff; border-bottom: 3px solid #d8d8d8; padding: 0 9px 9px; display: flex; flex-direction: column; gap: 2.500px; flex: none; }
.card-head { height: 30px; flex: none; margin: 0 -3px -2.500px -2px; padding-bottom: 6px; display: flex; justify-content: space-between; align-items: center; color: #0e7a9e; font-size: 14px; }
.form-row { display: flex; justify-content: space-between; align-items: center; }
.form-row label { color: #333; padding-bottom: 2px; }
.select { width: 141px; height: 25px; flex: none; background: #fff; border: 1px solid #a9a9a9; display: flex; align-items: center; justify-content: space-between; padding: 0 4px 0 5px; }
.select-value { display: flex; align-items: center; gap: 5px; color: #222; padding-bottom: 2px; }
.select-table { width: 53px; height: 34px; padding-left: 7px; }
.num { width: 82px; height: 22px; flex: none; background: #fff; border: 1px solid #a9a9a9; display: flex; justify-content: flex-end; overflow: hidden; font: 300 17px/20px Roboto, "Liberation Sans", sans-serif; color: #222; position: relative; }
.num::after { content: ""; position: absolute; right: 0; top: 0; bottom: 0; width: 1px; background: #fff; }
.num-val { margin-right: -7px; flex: none; white-space: nowrap; letter-spacing: .05px; }
.num-dot { display: inline-block; width: 9.600px; text-align: center; font-style: normal; }
.check-row { height: 20.500px; justify-content: flex-start; gap: 5px; }
.check { width: 13px; height: 13px; flex: none; border: 1px solid #333; background: #fff; }
.text-box { height: 22px; flex: none; margin-left: 2px; background: #fff; border: 1px solid #a9a9a9; }
.card-inherit { width: 577px; flex: none; margin: 2px 0 0 9px; border-bottom-width: 2px; padding-bottom: 7px; }
.pick { width: 32px; height: 32px; flex: none; border: 1px solid #a9a9a9; background: #fff; display: flex; align-items: center; justify-content: center; }
.collapse { height: 20px; flex: none; display: flex; align-items: center; justify-content: center; padding-top: 5px; }
.tri-up { display: block; width: 0; height: 0; border-left: 5px solid transparent; border-right: 5px solid transparent; border-bottom: 6px solid #222; margin-right: 2px; }
.dlg-foot { flex: 1; margin-left: 2px; border-top: 1px solid #ddd; display: flex; justify-content: flex-end; gap: 5px; padding: 8px 15px 0 0; align-items: flex-start; }
.btn { width: 54px; height: 25px; border: 1px solid #a9a9a9; background: #dcdcdc; color: #333; font: 12px/1 "Noto Sans CJK SC", sans-serif; padding: 0; }
.btn-primary { background: #72b2c9; border-color: #72b2c9; color: #fff; }

.scribble { position: absolute; left: 205px; top: 110px; pointer-events: none; }
```
